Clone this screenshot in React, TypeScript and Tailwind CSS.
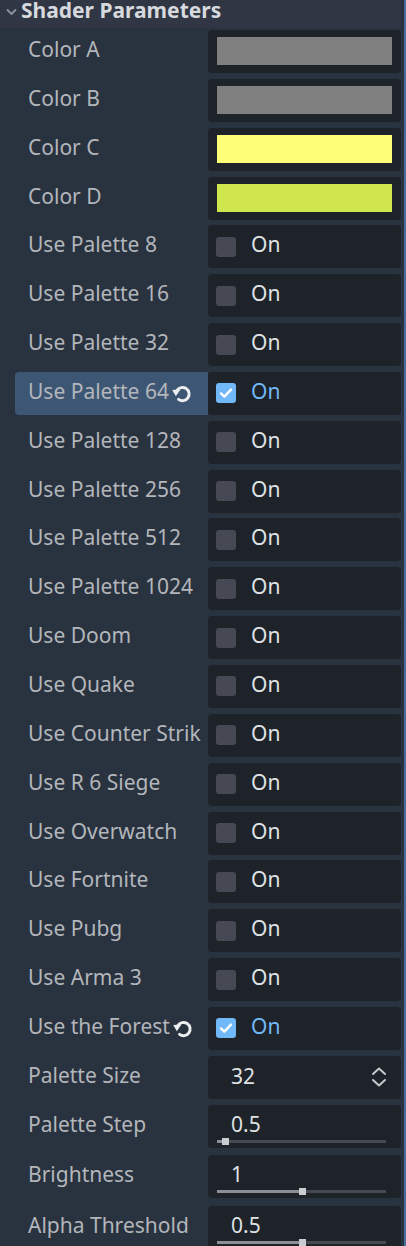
import React from "react";

type Row =
  | { kind: "color"; label: string; color: string }
  | { kind: "check"; label: string; checked?: boolean; highlight?: boolean }
  | { kind: "spin"; label: string; value: string }
  | { kind: "slider"; label: string; value: string; pct: number; extra?: boolean };

const rows: Row[] = [
  { kind: "color", label: "Color A", color: "#808080" },
  { kind: "color", label: "Color B", color: "#808080" },
  { kind: "color", label: "Color C", color: "#ffff78" },
  { kind: "color", label: "Color D", color: "#cfe64f" },
  { kind: "check", label: "Use Palette 8" },
  { kind: "check", label: "Use Palette 16" },
  { kind: "check", label: "Use Palette 32" },
  { kind: "check", label: "Use Palette 64", checked: true, highlight: true },
  { kind: "check", label: "Use Palette 128" },
  { kind: "check", label: "Use Palette 256" },
  { kind: "check", label: "Use Palette 512" },
  { kind: "check", label: "Use Palette 1024" },
  { kind: "check", label: "Use Doom" },
  { kind: "check", label: "Use Quake" },
  { kind: "check", label: "Use Counter Strik" },
  { kind: "check", label: "Use R 6 Siege" },
  { kind: "check", label: "Use Overwatch" },
  { kind: "check", label: "Use Fortnite" },
  { kind: "check", label: "Use Pubg" },
  { kind: "check", label: "Use Arma 3" },
  { kind: "check", label: "Use the Forest", checked: true },
  { kind: "spin", label: "Palette Size", value: "32" },
  { kind: "slider", label: "Palette Step", value: "0.5", pct: 5 },
  { kind: "slider", label: "Brightness", value: "1", pct: 50, extra: true },
  { kind: "slider", label: "Alpha Threshold", value: "0.5", pct: 50, extra: true },
];

function ResetIcon() {
  return (
    <svg width="21" height="21" viewBox="0 0 20 20" className="shrink-0">
      <path
        d="M5.6 7.2 A6.3 6.3 0 1 1 7.2 15.6"
        fill="none"
        stroke="#eceef0"
        strokeWidth="2.8"
        strokeLinecap="round"
      />
      <path d="M1.2 6.6 L9 6.2 L4.6 12.6 Z" fill="#eceef0" />
    </svg>
  );
}

function Field({ row }: { row: Row }) {
  const base =
    "w-[193px] h-[43px] shrink-0 rounded-[4px] bg-[#1e2229] relative";
  if (row.kind === "color") {
    return (
      <div className={base + " px-[9px] pt-[7px] pb-[8px] flex"}>
        <div className="flex-1" style={{ background: row.color }} />
      </div>
    );
  }
  if (row.kind === "check") {
    return (
      <div className={base + " flex items-center pl-[8px]"}>
        {row.checked ? (
          <div className="w-[20px] h-[20px] rounded-[3px] bg-[#70b8f7] flex items-center justify-center">
            <svg width="16" height="16" viewBox="0 0 16 16">
              <path
                d="M3 8.4 L6.4 11.6 L13 4.6"
                fill="none"
                stroke="#ffffff"
                strokeWidth="2.4"
                strokeLinecap="round"
                strokeLinejoin="round"
              />
            </svg>
          </div>
        ) : (
          <div className="w-[20px] h-[20px] rounded-[3px] bg-[#464954]" />
        )}
        <span
          className={
            "ml-[15px] text-[21px] leading-none -translate-y-[2px] " +
            (row.checked ? "text-[#71b8f6]" : "text-[#dfe1e4]")
          }
        >
          On
        </span>
      </div>
    );
  }
  if (row.kind === "spin") {
    return (
      <div className={base + " flex items-center pl-[23px] pr-[13px]"}>
        <span className="flex-1 text-[21px] leading-none text-[#dfe1e4] -translate-y-[1px]">
          {row.value}
        </span>
        <svg width="18" height="22" viewBox="0 0 18 22">
          <path
            d="M3 8 L9 2.5 L15 8"
            fill="none"
            stroke="#c7c9cd"
            strokeWidth="2"
            strokeLinecap="round"
            strokeLinejoin="round"
          />
          <path
            d="M3 14 L9 19.5 L15 14"
            fill="none"
            stroke="#c7c9cd"
            strokeWidth="2"
            strokeLinecap="round"
            strokeLinejoin="round"
          />
        </svg>
      </div>
    );
  }
  return (
    <div className={base + " flex flex-col pl-[23px]"}>
      <span className="mt-[8px] text-[21px] leading-[22px] text-[#dfe1e4]">
        {row.value}
      </span>
      <div className="ml-[-14px] mt-[5px] w-[169px] h-[3px] bg-[#454952] relative">
        <div
          className="absolute left-0 top-0 h-[3px] bg-[#8c8f95]"
          style={{ width: `${row.pct}%` }}
        />
        <div
          className="absolute top-[-2px] w-[7px] h-[7px] bg-[#c9ccd0]"
          style={{ left: `calc(${row.pct}% - 3px)` }}
        />
      </div>
    </div>
  );
}

export default function App() {
  return (
    <div
      className="w-[406px] h-[1246px] bg-[#29323f] flex overflow-hidden"
      style={{ fontFamily: '"Noto Sans", "Open Sans", sans-serif' }}
    >
      <div className="flex-1 flex flex-col">
        <div className="h-[28px] shrink-0 bg-[#303643] flex items-start pl-[6px]">
          <svg width="11" height="8" viewBox="0 0 11 8" className="mr-[4px] mt-[8px]">
            <path
              d="M1.5 2 L5.5 6 L9.5 2"
              fill="none"
              stroke="#8d939c"
              strokeWidth="1.8"
              strokeLinecap="round"
              strokeLinejoin="round"
            />
          </svg>
          <span className="text-[21px] font-bold text-[#d6d9dd] leading-[20px]">
            Shader Parameters
          </span>
        </div>
        <div className="flex flex-col gap-[5.85px] pt-[2px] shrink-0">
          {rows.map((row, i) => {
            const hl = row.kind === "check" && row.highlight;
            const reset = row.kind === "check" && row.checked;
            const extra = row.kind === "slider" && row.extra;
            return (
              <div
                key={i}
                className={
                  "flex items-stretch shrink-0 " + (extra ? "mt-[1.8px]" : "")
                }
              >
                <div
                  className={
                    "ml-[15px] w-[193px] flex items-center pl-[13px] overflow-hidden whitespace-nowrap rounded-l-[4px] " +
                    (hl ? "bg-[#3d5674]" : "")
                  }
                >
                  <span className="text-[21px] leading-none text-[#b3b6bb] -translate-y-[2px]">
                    {row.label}
                  </span>
                  {reset && (
                    <span className="ml-[2px] mt-[1px]">
                      <ResetIcon />
                    </span>
                  )}
                </div>
                <Field row={row} />
              </div>
            );
          })}
        </div>
      </div>
      <div className="w-[2px] ml-[3px] bg-[#4a6b9c]" />
    </div>
  );
}
